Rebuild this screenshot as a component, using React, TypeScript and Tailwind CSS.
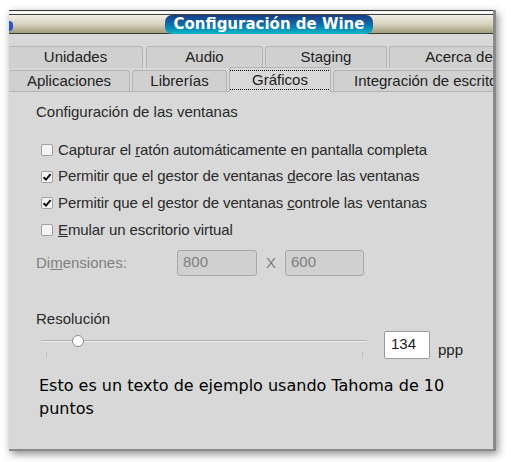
import React from "react";

const ui = { fontFamily: '"Liberation Sans", Arial, sans-serif' };

function Tab({ label, width, active, className = "" }: { label: string; width: number; active?: boolean; className?: string }) {
  return (
    <div
      className={`shrink-0 flex items-center justify-center overflow-hidden whitespace-nowrap rounded-t-[3px] border border-b-0 border-[#b4b4b4] text-[15px] text-[#1e1e1e] ${
        active ? "h-[25px] bg-[#d8d8d8] -mt-[2px] relative z-10" : "h-[22px] bg-[#d0d0d0]"
      } ${className}`}
      style={{ width }}
    >
      {active ? (
        <span className="border border-dotted border-black px-[22px] leading-[18px]">{label}</span>
      ) : (
        label
      )}
    </div>
  );
}

function Check({ checked, children }: { checked?: boolean; children: React.ReactNode }) {
  return (
    <div className="flex items-center h-[18px]">
      <div className="w-[12px] h-[12px] rounded-[2px] border border-[#a0a0a0] bg-[#f4f4f4] flex items-center justify-center">
        {checked && (
          <svg width="10" height="10" viewBox="0 0 10 10">
            <path d="M1.5 5.2 L4 7.6 L8.6 2.2" fill="none" stroke="#111" strokeWidth="2" />
          </svg>
        )}
      </div>
      <span className="ml-[5px] text-[15px] text-[#2a2a2a] whitespace-nowrap tracking-[-0.1px]">{children}</span>
    </div>
  );
}

export default function App() {
  return (
    <div className="w-[511px] h-[462px] bg-white overflow-hidden" style={ui}>
      <div className="ml-[9px] mt-[10px] w-[487px] h-[441px] flex flex-col bg-[#d8d8d8] border-r-[3px] border-b-[2px] border-[#8a8a8a] shadow-[2px_3px_8px_rgba(0,0,0,0.45)] overflow-hidden">
        {/* frame lines */}
        <div className="h-[1px] bg-[#333]" />
        <div className="h-[3px] bg-[#f6f6f6]" />
        <div className="h-[1px] bg-[#444]" />
        {/* title bar */}
        <div className="relative h-[19px] bg-gradient-to-b from-[#f1eee3] via-[#d8d4c0] to-[#a19c7e] border-b border-[#3a3a3a] flex">
          <div className="absolute left-0 top-[6px] w-[4px] h-[10px] rounded-r-full bg-[#2c56c8]" />
          <div className="ml-[156px] h-[19px] w-[208px] flex items-center justify-center bg-gradient-to-b from-[#183a86] via-[#0a6fa8] to-[#0db8c8] rounded-[7px]">
            <span className="text-white font-bold text-[15px] leading-none" style={{ fontFamily: '"DejaVu Sans", sans-serif' }}>
              Configuración de Wine
            </span>
          </div>
        </div>
        {/* tabs */}
        <div className="pt-[12px] bg-[#d8d8d8]">
          <div className="flex gap-[2px]">
            <Tab label="Unidades" width={134} className="border-l-0" />
            <Tab label="Audio" width={117} className="ml-[1px]" />
            <Tab label="Staging" width={122} />
            <Tab label="Acerca de" width={140} />
          </div>
          <div className="flex gap-[2px] mt-[1px] items-end">
            <Tab label="Aplicaciones" width={121} className="border-l-0" />
            <Tab label="Librerías" width={95} />
            <Tab label="Gráficos" width={102} active />
            <Tab label="Integración de escritorio" width={180} className="justify-start pl-[20px]" />
          </div>
        </div>
        {/* panel */}
        <div className="flex-1 border-t border-[#b4b4b4] -mt-[1px] pl-[27px] pt-[11px]">
          <div className="text-[15px] text-[#2a2a2a] h-[18px] leading-[18px]">Configuración de las ventanas</div>
          <div className="mt-[20px] ml-[5px] flex flex-col gap-[8.7px]">
            <Check>
              Capturar el <u>r</u>atón automáticamente en pantalla completa
            </Check>
            <Check checked>
              Permitir que el gestor de ventanas <u>d</u>ecore las ventanas
            </Check>
            <Check checked>
              Permitir que el gestor de ventanas <u>c</u>ontrole las ventanas
            </Check>
            <Check>
              <u>E</u>mular un escritorio virtual
            </Check>
          </div>
          <div className="mt-[11px] flex items-center h-[26px] text-[15px] text-[#808080]">
            <span className="w-[141px]">
              Di<u>m</u>ensiones:
            </span>
            <div className="w-[80px] h-[26px] rounded-[3px] border border-[#a8a8a8] bg-[#d0d0d0] pl-[5px] leading-[22px]">800</div>
            <span className="w-[28px] text-center">X</span>
            <div className="w-[79px] h-[26px] rounded-[3px] border border-[#a8a8a8] bg-[#d0d0d0] pl-[5px] leading-[22px]">600</div>
          </div>
          <div className="mt-[34px] text-[15px] text-[#2a2a2a] h-[18px] leading-[18px]">Resolución</div>
          <div className="flex items-start mt-[3px]">
            <div className="relative w-[326px] h-[28px] ml-[5px]">
              <div className="absolute left-0 right-0 top-[9px] h-[1px] bg-[#b0b0b0]" />
              <div className="absolute left-0 right-0 top-[10px] h-[1px] bg-[#ececec]" />
              <div className="absolute left-[31px] top-[4px] w-[12px] h-[12px] rounded-full bg-white border border-[#8c8c8c]" />
              <div className="absolute left-[5px] top-[21px] w-[1px] h-[5px] bg-[#bdbdbd]" />
              <div className="absolute left-[321px] top-[21px] w-[1px] h-[5px] bg-[#bdbdbd]" />
            </div>
            <div className="ml-[17px] mt-[0px] w-[46px] h-[28px] bg-white border border-[#9a9a9a] rounded-[2px] pl-[6px] text-[15px] leading-[24px] text-[#222]">
              134
            </div>
            <span className="ml-[8px] mt-[10px] text-[15px] text-[#222] leading-[18px]">ppp</span>
          </div>
          <div
            className="mt-[15px] ml-[3px] text-[16px] leading-[23px] text-black"
            style={{ fontFamily: '"DejaVu Sans", sans-serif' }}
          >
            Esto es un texto de ejemplo usando Tahoma de 10
            <br />
            puntos
          </div>
        </div>
      </div>
    </div>
  );
}
